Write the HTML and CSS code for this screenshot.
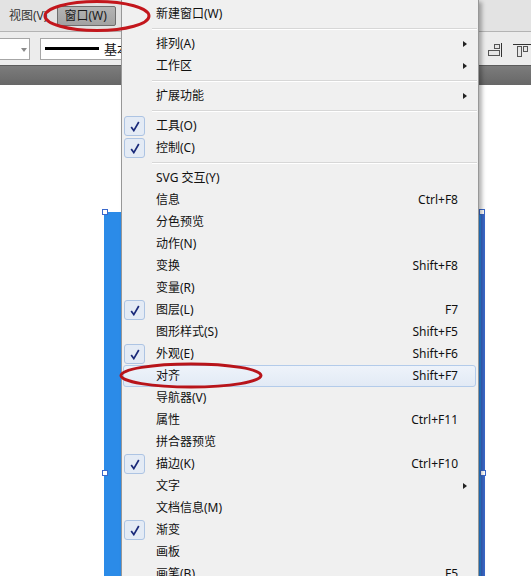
FILE: index.html
```html
<!DOCTYPE html>
<html>
<head>
    <title>窗口菜单</title>
    <link rel="stylesheet" href="styles.css">
</head>
<body>
    <div class="app">
        <div class="menubar">
            <span class="menubar-item">视图(V)</span>
            <span class="menubar-item active">窗口(W)</span>
        </div>

        <div class="toolbar">
            <div class="select-box"><span class="drop"></span></div>
            <div class="stroke-box"><span class="stroke-line"></span><span class="stroke-name">基本</span></div>
            <div class="align-tools">
                <svg width="16" height="14" viewBox="0 0 16 14">
                    <rect x="7.5" y="1.5" width="5" height="4" fill="#e6e6e6" stroke="#555"/>
                    <rect x="1.5" y="7.5" width="11" height="5" fill="#e6e6e6" stroke="#555"/>
                    <line x1="14.5" y1="0" x2="14.5" y2="14" stroke="#333"/>
                </svg>
                <svg width="18" height="14" viewBox="0 0 18 14">
                    <line x1="0" y1="1.5" x2="18" y2="1.5" stroke="#333"/>
                    <rect x="4.5" y="3.5" width="4" height="10" fill="#e6e6e6" stroke="#555"/>
                    <rect x="10.5" y="3.5" width="4" height="5" fill="#e6e6e6" stroke="#555"/>
                </svg>
            </div>
        </div>

        <div class="band"></div>

        <div class="canvas">
            <div class="shape"></div>
            <span class="handle h-tl"></span>
            <span class="handle h-tr"></span>
            <span class="handle h-ml"></span>
            <span class="handle h-mr"></span>
        </div>
    </div>

    <div class="menu">
        <div class="item"><span class="gutter"></span><span class="label">新建窗口(W)</span><span class="key"></span><span class="sub"></span></div>
        <div class="sep"></div>
        <div class="item"><span class="gutter"></span><span class="label">排列(A)</span><span class="key"></span><span class="sub"><i class="arrow"></i></span></div>
        <div class="item"><span class="gutter"></span><span class="label">工作区</span><span class="key"></span><span class="sub"><i class="arrow"></i></span></div>
        <div class="sep"></div>
        <div class="item"><span class="gutter"></span><span class="label">扩展功能</span><span class="key"></span><span class="sub"><i class="arrow"></i></span></div>
        <div class="sep"></div>
        <div class="item"><span class="gutter"><span class="check"><svg width="10" height="11" viewBox="0 0 10 11"><path d="M1.2 6 L3.8 9.6 L8.8 1" fill="none" stroke="#1a2a7a" stroke-width="1.7"/></svg></span></span><span class="label">工具(O)</span><span class="key"></span><span class="sub"></span></div>
        <div class="item"><span class="gutter"><span class="check"><svg width="10" height="11" viewBox="0 0 10 11"><path d="M1.2 6 L3.8 9.6 L8.8 1" fill="none" stroke="#1a2a7a" stroke-width="1.7"/></svg></span></span><span class="label">控制(C)</span><span class="key"></span><span class="sub"></span></div>
        <div class="sep"></div>
        <div class="item"><span class="gutter"></span><span class="label">SVG 交互(Y)</span><span class="key"></span><span class="sub"></span></div>
        <div class="item"><span class="gutter"></span><span class="label">信息</span><span class="key">Ctrl+F8</span><span class="sub"></span></div>
        <div class="item"><span class="gutter"></span><span class="label">分色预览</span><span class="key"></span><span class="sub"></span></div>
        <div class="item"><span class="gutter"></span><span class="label">动作(N)</span><span class="key"></span><span class="sub"></span></div>
        <div class="item"><span class="gutter"></span><span class="label">变换</span><span class="key">Shift+F8</span><span class="sub"></span></div>
        <div class="item"><span class="gutter"></span><span class="label">变量(R)</span><span class="key"></span><span class="sub"></span></div>
        <div class="item"><span class="gutter"><span class="check"><svg width="10" height="11" viewBox="0 0 10 11"><path d="M1.2 6 L3.8 9.6 L8.8 1" fill="none" stroke="#1a2a7a" stroke-width="1.7"/></svg></span></span><span class="label">图层(L)</span><span class="key">F7</span><span class="sub"></span></div>
        <div class="item"><span class="gutter"></span><span class="label">图形样式(S)</span><span class="key">Shift+F5</span><span class="sub"></span></div>
        <div class="item"><span class="gutter"><span class="check"><svg width="10" height="11" viewBox="0 0 10 11"><path d="M1.2 6 L3.8 9.6 L8.8 1" fill="none" stroke="#1a2a7a" stroke-width="1.7"/></svg></span></span><span class="label">外观(E)</span><span class="key">Shift+F6</span><span class="sub"></span></div>
        <div class="item hover"><span class="gutter"></span><span class="label">对齐</span><span class="key">Shift+F7</span><span class="sub"></span></div>
        <div class="item"><span class="gutter"></span><span class="label">导航器(V)</span><span class="key"></span><span class="sub"></span></div>
        <div class="item"><span class="gutter"></span><span class="label">属性</span><span class="key">Ctrl+F11</span><span class="sub"></span></div>
        <div class="item"><span class="gutter"></span><span class="label">拼合器预览</span><span class="key"></span><span class="sub"></span></div>
        <div class="item"><span class="gutter"><span class="check"><svg width="10" height="11" viewBox="0 0 10 11"><path d="M1.2 6 L3.8 9.6 L8.8 1" fill="none" stroke="#1a2a7a" stroke-width="1.7"/></svg></span></span><span class="label">描边(K)</span><span class="key">Ctrl+F10</span><span class="sub"></span></div>
        <div class="item"><span class="gutter"></span><span class="label">文字</span><span class="key"></span><span class="sub"><i class="arrow"></i></span></div>
        <div class="item"><span class="gutter"></span><span class="label">文档信息(M)</span><span class="key"></span><span class="sub"></span></div>
        <div class="item"><span class="gutter"><span class="check"><svg width="10" height="11" viewBox="0 0 10 11"><path d="M1.2 6 L3.8 9.6 L8.8 1" fill="none" stroke="#1a2a7a" stroke-width="1.7"/></svg></span></span><span class="label">渐变</span><span class="key"></span><span class="sub"></span></div>
        <div class="item"><span class="gutter"></span><span class="label">画板</span><span class="key"></span><span class="sub"></span></div>
        <div class="item"><span class="gutter"></span><span class="label">画笔(B)</span><span class="key">F5</span><span class="sub"></span></div>
    </div>

    <!-- red marks drawn over the screenshot -->
    <svg class="marks" width="531" height="576" viewBox="0 0 531 576">
        <ellipse cx="97" cy="16" rx="52" ry="14.5" fill="none" stroke="#c3161c" stroke-width="3"/>
        <ellipse cx="191" cy="375.5" rx="70" ry="11.5" fill="none" stroke="#b8141a" stroke-width="3"/>
    </svg>
</body>
</html>
```

FILE: styles.css
```css
body {
    margin: 0;
    width: 531px;
    height: 576px;
    overflow: hidden;
    position: relative;
    font-family: "Noto Sans", "Noto Sans CJK SC", sans-serif;
    font-size: 12px;
    color: #111;
    background: #fff;
}

.app {
    display: flex;
    flex-direction: column;
    height: 576px;
}

.menubar {
    height: 31px;
    background: #e3e3e3;
    border-bottom: 1px solid #b4b4b4;
    display: flex;
    align-items: center;
    padding-left: 9px;
    gap: 10px;
}
.menubar-item {
    color: #333;
    line-height: 16px;
}
.menubar-item.active {
    color: #1a1a1a;
    padding: 1px 6px;
    background: linear-gradient(#b4b4b4, #a2a2a2);
    border: 1px solid #6e6e6e;
    border-radius: 2px;
    width: 45px;
}

.toolbar {
    height: 33px;
    background: #ececec;
    display: flex;
    align-items: center;
    gap: 10px;
    overflow: hidden;
}
.select-box {
    width: 29px;
    height: 20px;
    margin-left: -1px;
    background: #fff;
    border: 1px solid #a6a6a6;
    position: relative;
}
.drop {
    position: absolute;
    left: 21px;
    top: 9px;
    border-top: 4px solid #8a8a8a;
    border-left: 3px solid transparent;
    border-right: 3px solid transparent;
}
.stroke-box {
    width: 120px;
    height: 20px;
    background: #fff;
    border: 1px solid #a6a6a6;
    display: flex;
    align-items: center;
    padding-left: 4px;
}
.stroke-line {
    width: 54px;
    height: 3px;
    background: #000;
}
.stroke-name {
    margin-left: 5px;
    font-size: 13px;
    line-height: 16px;
}
.align-tools {
    margin-left: auto;
    display: flex;
    gap: 10px;
    align-items: center;
    margin-top: 2px;
}

.band {
    height: 19px;
    background: linear-gradient(#7c7c7c, #676767);
    border-top: 1px solid #5b5b5b;
}

.canvas {
    flex: 1;
    position: relative;
    background: #fff;
}
.shape {
    position: absolute;
    left: 104px;
    top: 127px;
    width: 377px;
    height: 600px;
    background: #2b8be8;
    border-right: 4px solid #3b69cb;
}
.handle {
    position: absolute;
    width: 4px;
    height: 4px;
    background: #fff;
    border: 1px solid #3b69cb;
}
.h-tl { left: 102px; top: 124px; }
.h-tr { left: 479px; top: 124px; }
.h-ml { left: 102px; top: 385px; }
.h-mr { left: 480px; top: 385px; }

.menu {
    position: absolute;
    left: 121px;
    top: 0;
    width: 356px;
    height: 600px;
    padding-top: 3px;
    background: #f0f0f0;
    border-left: 1px solid #979797;
    border-right: 1px solid #979797;
    box-shadow: 3px 2px 4px rgba(0, 0, 0, 0.3);
}
.item {
    position: relative;
    height: 22px;
    display: flex;
    align-items: center;
    line-height: 16px;
}
.item.hover::before {
    content: "";
    position: absolute;
    left: 1px;
    right: 2px;
    top: 0;
    bottom: 0;
    border: 1px solid #b3cbea;
    border-radius: 3px;
    background: linear-gradient(#eef3fa, #e2eaf5);
}
.gutter {
    width: 30px;
    height: 22px;
    position: relative;
    flex: none;
}
.check {
    position: absolute;
    left: 2px;
    top: 1px;
    width: 19px;
    height: 18px;
    border: 1px solid #adc4e3;
    border-radius: 3px;
    background: #e4ebf5;
    display: flex;
    align-items: center;
    justify-content: center;
}
.label {
    flex: 1;
    padding-left: 4px;
    position: relative;
}
.key {
    position: relative;
}
.sub {
    width: 20px;
    flex: none;
    display: flex;
    align-items: center;
}
.arrow {
    margin-left: 5px;
    border-left: 4px solid #222;
    border-top: 3.5px solid transparent;
    border-bottom: 3.5px solid transparent;
}
.sep {
    height: 8px;
    margin-left: 30px;
    position: relative;
}
.sep::after {
    content: "";
    position: absolute;
    left: 0;
    right: 1px;
    top: 3px;
    height: 1px;
    background: #d7d7d7;
    border-bottom: 1px solid #fff;
}

.marks {
    position: absolute;
    left: 0;
    top: 0;
    pointer-events: none;
}
```
